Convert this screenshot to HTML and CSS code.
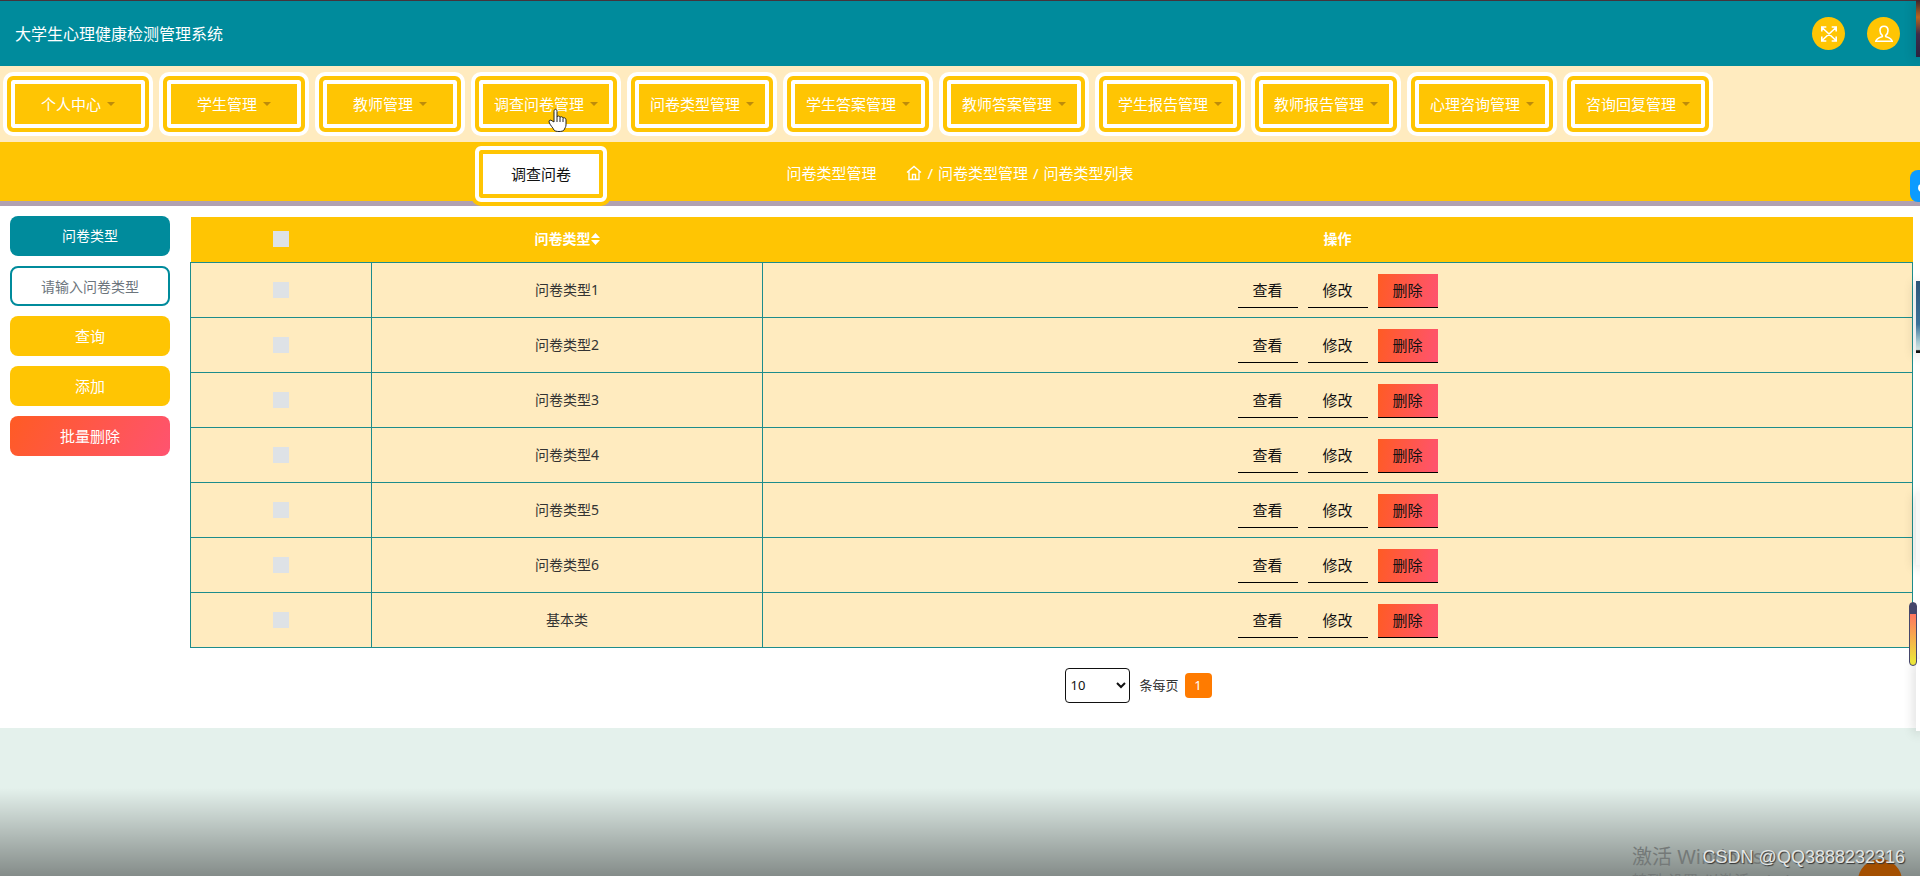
FILE: index.html
```html
<!DOCTYPE html>
<html lang="zh-CN">
<head>
<meta charset="utf-8">
<title>大学生心理健康检测管理系统</title>
<link rel="stylesheet" href="styles.css">
</head>
<body>
<header class="topbar">
  <h1 class="brand">大学生心理健康检测管理系统</h1>
  <div class="tools">
    <button class="round" type="button" aria-label="全屏">
      <svg width="18" height="18" viewBox="0 0 18 18"><path d="M2 2.500l14 13M16 2.500l-14 13M1.800 6.500v-4.500h4.500M11.700 2h4.500v4.500M16.200 11.500v4.500h-4.500M6.300 16H1.800v-4.500"/></svg>
    </button>
    <button class="round" type="button" aria-label="用户">
      <svg width="18" height="18" viewBox="0 0 18 18"><path d="M7.300 10.500C5.800 9.500 5 7.600 5 5.600C5 2.800 6.500 1.300 9 1.300s4 1.500 4 4.300c0 2-.8 3.900-2.300 4.900v1c2.700.9 5.900 1.800 6.500 4.700H.8c.6-2.900 3.800-3.800 6.500-4.700z"/></svg>
    </button>
  </div>
</header>
<nav class="menu">
  <button class="menu-item" type="button">个人中心<span class="caret"></span></button>
  <button class="menu-item" type="button">学生管理<span class="caret"></span></button>
  <button class="menu-item" type="button">教师管理<span class="caret"></span></button>
  <div class="menu-group">
    <button class="menu-item" type="button" aria-expanded="true">调查问卷管理<span class="caret"></span></button>
    <a class="submenu" href="#">调查问卷</a>
    <svg class="pointer" width="20" height="26" viewBox="0 0 20 26"><path d="M6 14V3.500C6 .5 9 .5 9 3.500V9c.5-1.500 3-1.200 3 .5c.6-1.300 3-1 3 .8c.8-1 3-.6 3 1.500V17c0 2-1.500 3.500-2 5c-1 2-9 2-10 0c-.8-2-4-5-5-8c-.3-2 1.800-2.500 3-1.200z"/><path d="M9 9v5M12 9.500V14M15 10.500V14"/></svg>
  </div>
  <button class="menu-item" type="button">问卷类型管理<span class="caret"></span></button>
  <button class="menu-item" type="button">学生答案管理<span class="caret"></span></button>
  <button class="menu-item" type="button">教师答案管理<span class="caret"></span></button>
  <button class="menu-item" type="button">学生报告管理<span class="caret"></span></button>
  <button class="menu-item" type="button">教师报告管理<span class="caret"></span></button>
  <button class="menu-item" type="button">心理咨询管理<span class="caret"></span></button>
  <button class="menu-item" type="button">咨询回复管理<span class="caret"></span></button>
</nav>
<div class="crumbs">
  <span>问卷类型管理</span>
  <div class="path">
    <a href="#" aria-label="首页"><svg width="16" height="16" viewBox="0 0 16 16"><path d="M1 7.500L8 1.500l7 6M3 6.500V14.500h10V6.500M6.500 14.500V9.500h3v5"/></svg></a>
    <span>/</span><a href="#">问卷类型管理</a><span>/</span><span>问卷类型列表</span>
  </div>
</div>
<main class="content">
  <form class="filters">
    <label class="field-label" for="kind">问卷类型</label>
    <input class="field" id="kind" type="text" placeholder="请输入问卷类型">
    <button class="btn" type="button">查询</button>
    <button class="btn" type="button">添加</button>
    <button class="btn btn-danger" type="button">批量删除</button>
  </form>
  <section class="list">
    <table class="grid">
      <thead><tr><th class="col-check"><input class="check" type="checkbox" aria-label="全选"></th><th class="col-name"><span class="sortable">问卷类型<svg width="9" height="14" viewBox="0 0 9 14"><path d="M4.500 1l4.500 5H0zM4.500 13l4.500-5H0z"/></svg></span></th><th>操作</th></tr></thead>
      <tbody>
        <tr><td><input class="check" type="checkbox" aria-label="问卷类型1"></td><td>问卷类型1</td><td><div class="acts"><button class="act" type="button">查看</button><button class="act" type="button">修改</button><button class="act act-del" type="button">删除</button></div></td></tr>
        <tr><td><input class="check" type="checkbox" aria-label="问卷类型2"></td><td>问卷类型2</td><td><div class="acts"><button class="act" type="button">查看</button><button class="act" type="button">修改</button><button class="act act-del" type="button">删除</button></div></td></tr>
        <tr><td><input class="check" type="checkbox" aria-label="问卷类型3"></td><td>问卷类型3</td><td><div class="acts"><button class="act" type="button">查看</button><button class="act" type="button">修改</button><button class="act act-del" type="button">删除</button></div></td></tr>
        <tr><td><input class="check" type="checkbox" aria-label="问卷类型4"></td><td>问卷类型4</td><td><div class="acts"><button class="act" type="button">查看</button><button class="act" type="button">修改</button><button class="act act-del" type="button">删除</button></div></td></tr>
        <tr><td><input class="check" type="checkbox" aria-label="问卷类型5"></td><td>问卷类型5</td><td><div class="acts"><button class="act" type="button">查看</button><button class="act" type="button">修改</button><button class="act act-del" type="button">删除</button></div></td></tr>
        <tr><td><input class="check" type="checkbox" aria-label="问卷类型6"></td><td>问卷类型6</td><td><div class="acts"><button class="act" type="button">查看</button><button class="act" type="button">修改</button><button class="act act-del" type="button">删除</button></div></td></tr>
        <tr><td><input class="check" type="checkbox" aria-label="基本类"></td><td>基本类</td><td><div class="acts"><button class="act" type="button">查看</button><button class="act" type="button">修改</button><button class="act act-del" type="button">删除</button></div></td></tr>
      </tbody>
    </table>
    <div class="pager">
      <select class="size" id="size"><option>10</option><option>20</option></select>
      <label class="size-label" for="size">条每页</label>
      <button class="page" type="button">1</button>
    </div>
  </section>
</main>
<div class="shade"></div>
<div class="activate"><p class="activate-title">激活 Windows</p><p class="activate-note">转到"设置"以激活 Windows。</p></div>
<div class="ball"></div>
<div class="credit">CSDN @QQ3888232316</div>
<div class="edge photo-top"></div>
<div class="edge tab"><i class="tab-dot"></i></div>
<div class="edge photo-mid"></div>
<div class="edge card-mid"></div>
<div class="edge card-low"></div>
<div class="meter"></div>
</body>
</html>
```
FILE: styles.css
```css
* { box-sizing: border-box; }
html { background: #e4f1ec; overflow: hidden; height: 100%; }
body {
  margin: 0;
  height: 100%;
  overflow: hidden;
  position: relative;
  font-family: "Noto Sans", "Noto Sans CJK SC", sans-serif;
  font-size: 14px;
  line-height: 20px;
  color: #333;
}
button, input, select { font: inherit; color: inherit; margin: 0; }
a { color: inherit; text-decoration: none; }
svg { display: block; }

.topbar {
  display: flex;
  align-items: center;
  justify-content: space-between;
  height: 66px;
  padding: 0 20px 0 15px;
  border-top: 1px solid #44343c;
  background: #008b9c;
}
.brand { margin: 0; font-size: 16px; font-weight: 400; color: #fff; }
.tools { display: flex; gap: 22px; }
.round {
  display: grid;
  place-items: center;
  width: 33px;
  height: 33px;
  padding: 0;
  border: 0;
  border-radius: 50%;
  background: #ffc503;
}
.round svg { fill: none; stroke: #fff; stroke-width: 1.6; }

.menu {
  display: flex;
  gap: 14px;
  height: 76px;
  padding: 10px 7px;
  background: #ffebbf;
}
.menu-group { position: relative; }
.menu-item {
  display: flex;
  align-items: center;
  justify-content: center;
  gap: 6px;
  width: 142px;
  height: 56px;
  padding: 0;
  border: 4px solid #ffc503;
  border-radius: 6px;
  background: #ffc503;
  box-shadow: 0 0 0 4px #fff, inset 0 0 0 4px #fff;
  font-size: 15px;
  color: #fff;
  white-space: nowrap;
}
.caret {
  border: 4px solid transparent;
  border-top-color: #bd8c0b;
  border-bottom: 0;
}
.submenu {
  position: absolute;
  z-index: 2;
  top: 70px;
  left: 0;
  display: flex;
  align-items: center;
  justify-content: center;
  width: 132px;
  height: 56px;
  border: 4px solid #fff;
  border-radius: 6px;
  background: #fff;
  box-shadow: 0 0 0 4px #ffc503, inset 0 0 0 4px #ffc503;
  font-size: 15px;
  color: #111;
}
.pointer { position: absolute; z-index: 3; left: 73px; top: 32px; fill: #fff; stroke: #222; }

.crumbs {
  display: flex;
  align-items: center;
  justify-content: center;
  gap: 30px;
  height: 64px;
  padding-top: 3px;
  border-bottom: 5px solid #b0a1b1;
  background: #ffc503;
  font-size: 15px;
  color: #fff;
}
.crumbs svg { fill: none; stroke: #fff; stroke-width: 1.4; }
.path { display: flex; align-items: center; gap: 5px; }

.content {
  display: flex;
  align-items: flex-start;
  gap: 20px;
  padding: 10px 7px 25px 10px;
  background: #fff;
}
.filters { display: flex; flex-direction: column; gap: 10px; width: 160px; flex: none; }
.field-label, .field, .btn { width: 100%; height: 40px; border: 0; border-radius: 8px; text-align: center; }
.field-label { background: #008b9c; color: #fff; line-height: 40px; }
.field { border: 2px solid #008b9c; background: #fff; }
.field::placeholder { color: #6c757d; opacity: 1; }
.btn { background: #ffc503; color: #fff; font-size: 15px; }
.btn-danger { background: linear-gradient(120deg, #ff5b24, #ff5370); }

.list { flex: 1; padding-top: 1px; }
.grid { width: 100%; border-collapse: collapse; table-layout: fixed; text-align: center; }
.grid th { height: 45px; padding: 0; background: #ffc503; color: #fff; font-weight: 700; }
.grid td { height: 55px; padding: 0; border: 1px solid #1d8c8c; background: #ffebbf; }
.col-check { width: 181px; }
.col-name { width: 391px; }
.sortable { display: inline-flex; align-items: center; }
.sortable svg { fill: #fff; }
.check { appearance: none; display: block; width: 16px; height: 16px; margin: 0 auto; background: #dee2e6; }
.acts { display: flex; justify-content: center; gap: 10px; padding-top: 2px; }
.act {
  width: 60px;
  height: 34px;
  padding: 0;
  border: 0;
  border-bottom: 1px solid #000;
  background: none;
  font-size: 15px;
  color: #111;
}
.act-del { background: linear-gradient(100deg, #ff5b24, #ff5370); }

.pager {
  display: flex;
  align-items: center;
  justify-content: center;
  padding: 20px 0 0 174px;
  font-size: 13px;
}
.size { width: 65px; height: 35px; border: 1px solid #111; border-radius: 4px; background: #fff; color: #111; }
.size-label { margin: 0 6px 0 9px; }
.page { width: 27px; height: 25px; padding: 0; border: 0; border-radius: 4px; background: #ff7b00; color: #fff; }

.shade { position: absolute; left: 0; right: 0; bottom: 0; height: 88px; background: linear-gradient(rgba(0,0,0,0), rgba(0,0,0,.42)); }
.activate { position: absolute; top: 845px; left: 1632px; color: #747978; white-space: nowrap; }
.activate p { margin: 0; }
.activate-title { font-size: 20px; line-height: 24px; }
.activate-note { font-size: 15px; line-height: 22px; }
.ball { position: absolute; right: 18px; top: 859px; width: 44px; height: 44px; border-radius: 50%; background: #a44f00; }
.credit {
  position: absolute;
  right: 15px;
  top: 845px;
  font-family: "Liberation Sans", sans-serif;
  font-size: 18px;
  line-height: 24px;
  color: #e3e6e5;
  text-shadow: 1px 1px 1px #333;
}
.edge { position: absolute; right: 0; width: 4px; box-shadow: 0 2px 12px rgba(0,0,0,.3); }
.photo-top { top: 0; height: 57px; background: linear-gradient(#3b2530, #b8641f 30%, #3f2c4a 60%, #2b2440); }
.tab { top: 170px; width: 10px; height: 32px; border-radius: 8px 0 0 8px; background: #0c9bff; box-shadow: none; overflow: hidden; }
.tab-dot { position: absolute; left: 8px; top: 14px; width: 8px; height: 8px; border-radius: 50%; background: #fff; }
.photo-mid { top: 281px; height: 72px; background: linear-gradient(#2d5578, #3b7199 60%, #a9cbd3 85%, #cfe0df 95%, #111 97%); }
.card-mid { top: 493px; height: 72px; background: #f7f7f7; }
.card-low { top: 659px; height: 72px; background: #fff; }
.meter {
  position: absolute;
  right: 3px;
  top: 602px;
  width: 8px;
  height: 64px;
  border: 1px solid #45466a;
  border-radius: 4px;
  background: linear-gradient(#45466a 11px, #ff7560 11px, #ece43b 58px);
}
```
